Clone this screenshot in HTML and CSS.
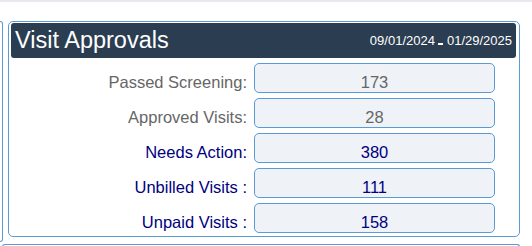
FILE: index.html
```html
<!DOCTYPE html>
<html lang="en">
<head>
    <meta charset="UTF-8">
    <meta name="viewport" content="width=device-width, initial-scale=1.0">
    <title>Visit Approvals</title>
    <link rel="stylesheet" href="styles.css">
</head>
<body>
    <div class="top-strip"></div>

    <div class="page">
        <div class="panel-row">
            <div class="side-panel"></div>

            <div class="panel">
                <div class="panel-header">
                    <h2>Visit Approvals</h2>
                    <div class="date-range">09/01/2024<span class="dash"></span>01/29/2025</div>
                </div>

                <div class="stats">
                    <label class="muted">Passed Screening:</label>
                    <div class="stat-box muted">173</div>

                    <label class="muted">Approved Visits:</label>
                    <div class="stat-box muted">28</div>

                    <label>Needs Action:</label>
                    <div class="stat-box">380</div>

                    <label>Unbilled Visits :</label>
                    <div class="stat-box">111</div>

                    <label>Unpaid Visits :</label>
                    <div class="stat-box">158</div>
                </div>
            </div>
        </div>

        <div class="lower-panel"></div>
    </div>
</body>
</html>
```

FILE: styles.css
```css
body {
    font-family: 'Liberation Sans', Arial, sans-serif;
    background-color: #fff;
    color: #000080;
    margin: 0;
}

.top-strip {
    height: 2px;
    background-color: #e6e9ee;
}

.page {
    padding-top: 19px;
}

.panel-row {
    display: flex;
    align-items: flex-start;
}

.side-panel {
    width: 2px;
    height: 219px;
    border: 1px solid #5b9bd5;
    border-left: none;
    border-radius: 0 5px 5px 0;
}

.panel {
    width: 512px;
    margin-left: 5px;
    padding: 1px 3px 3px 2px;
    border: 1px solid #5b9bd5;
    border-radius: 5px;
    box-sizing: border-box;
}

.panel-header {
    display: flex;
    justify-content: space-between;
    align-items: center;
    height: 35px;
    padding: 0 4px 0 4px;
    background-color: #2b3d51;
    border-radius: 3px;
    color: #fff;
}

.panel-header h2 {
    margin: 0;
    font-size: 23.5px;
    font-weight: normal;
}

.date-range {
    font-size: 13px;
}

.dash {
    display: inline-block;
    width: 5px;
    height: 2px;
    margin: 0 4px 0 3px;
    background-color: #fff;
}

.stats {
    display: grid;
    grid-template-columns: 236px 241px;
    column-gap: 7px;
    row-gap: 5px;
    margin-top: 5px;
}

.stats label {
    text-align: right;
    font-size: 16.5px;
    line-height: 20px;
    padding-top: 9px;
}

.stat-box {
    height: 30px;
    padding-top: 8px;
    box-sizing: border-box;
    border: 1px solid #5b9bd5;
    border-radius: 5px;
    background-color: #eff3f8;
    text-align: center;
    font-size: 16.5px;
    line-height: 20px;
}

.muted {
    color: #666;
}

.lower-panel {
    width: 518px;
    height: 3px;
    margin: 2px 0 0 2px;
    border: 1px solid #5b9bd5;
    border-bottom: none;
    border-radius: 5px 5px 0 0;
    box-sizing: border-box;
}
```
